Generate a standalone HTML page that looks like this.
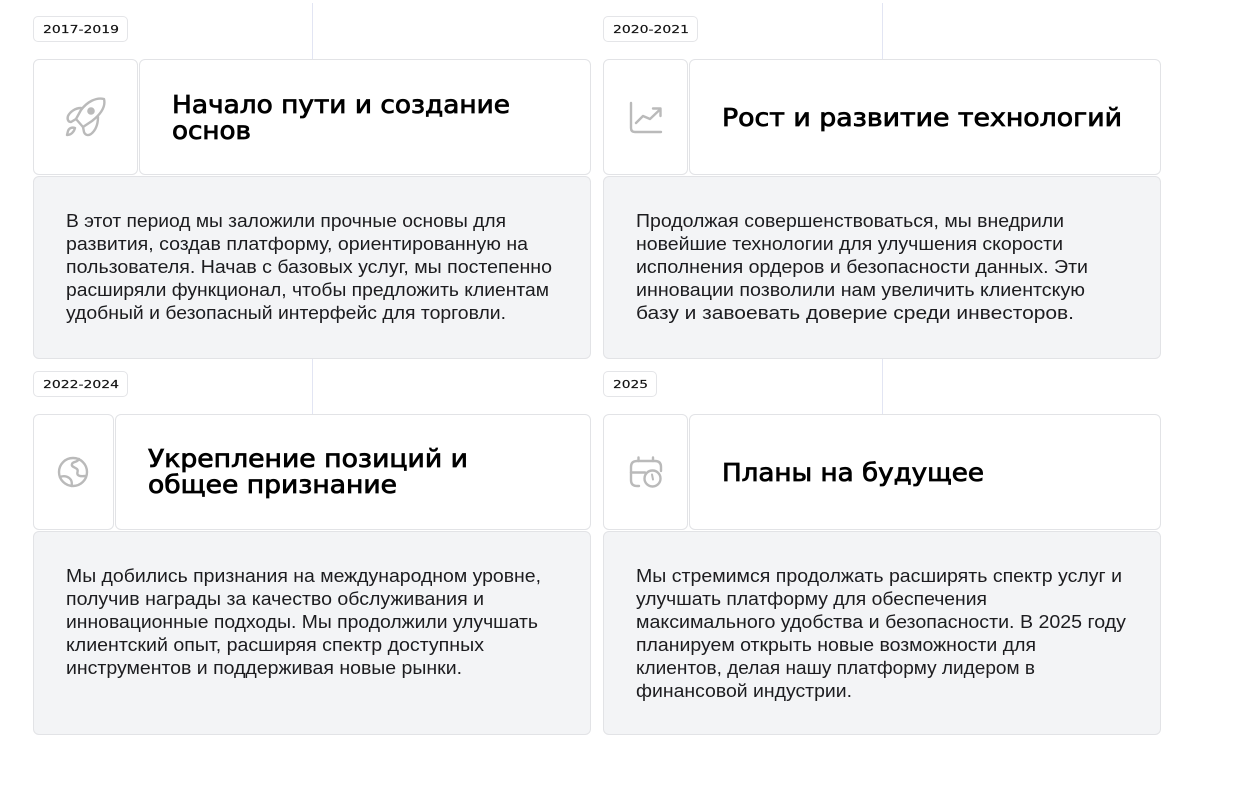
<!DOCTYPE html>
<html lang="ru">
<head>
<meta charset="utf-8">
<title>Timeline</title>
<style>
html,body{margin:0;padding:0;background:#fff;width:1248px;height:786px;overflow:hidden}
svg{display:block}
.box{fill:#fff;stroke:#e2e3e6;stroke-width:1}
.bd{fill:#f3f4f6;stroke:#e2e3e6;stroke-width:1}
.bg{fill:#fff;stroke:#e4e5e8;stroke-width:1}
.vl{stroke:#e2e5f3;stroke-width:1}
.t{font-family:"Liberation Sans","DejaVu Sans",sans-serif;font-size:18.5px;fill:#1c1c1f}
.h{font-family:"DejaVu Sans","Liberation Sans",sans-serif;font-size:24.5px;font-weight:400;fill:#000;stroke:#000;stroke-width:.8px}
.y{font-family:"DejaVu Sans","Liberation Sans",sans-serif;font-size:10.5px;fill:#111;stroke:#111;stroke-width:.15px}
.i{fill:none;stroke:#bababa;stroke-width:2.4;stroke-linecap:round;stroke-linejoin:round}
</style>
</head>
<body>
<svg width="1248" height="786" viewBox="0 0 1248 786" xmlns="http://www.w3.org/2000/svg">
<line class="vl" x1="312.5" y1="3" x2="312.5" y2="59"/>
<line class="vl" x1="882.5" y1="3" x2="882.5" y2="59"/>
<line class="vl" x1="312.5" y1="359" x2="312.5" y2="414"/>
<line class="vl" x1="882.5" y1="359" x2="882.5" y2="414"/>

<rect class="bg" x="33.5" y="16.5" width="94" height="25" rx="4.5"/>
<rect class="bg" x="603.5" y="16.5" width="94" height="25" rx="4.5"/>
<rect class="bg" x="33.5" y="371.5" width="94" height="25" rx="4.5"/>
<rect class="bg" x="603.5" y="371.5" width="53" height="25" rx="4.5"/>
<text class="y" x="43" y="33" textLength="76" lengthAdjust="spacingAndGlyphs">2017-2019</text>
<text class="y" x="613" y="33" textLength="76" lengthAdjust="spacingAndGlyphs">2020-2021</text>
<text class="y" x="43" y="388" textLength="76" lengthAdjust="spacingAndGlyphs">2022-2024</text>
<text class="y" x="613" y="388" textLength="35" lengthAdjust="spacingAndGlyphs">2025</text>

<rect class="box" x="33.5" y="59.5" width="104" height="115" rx="5.5"/>
<rect class="box" x="139.5" y="59.5" width="451" height="115" rx="5.5"/>
<rect class="bd" x="33.5" y="176.5" width="557" height="182" rx="5.5"/>
<rect class="box" x="603.5" y="59.5" width="84" height="115" rx="5.5"/>
<rect class="box" x="689.5" y="59.5" width="471" height="115" rx="5.5"/>
<rect class="bd" x="603.5" y="176.5" width="557" height="182" rx="5.5"/>
<rect class="box" x="33.5" y="414.5" width="80" height="115" rx="5.5"/>
<rect class="box" x="115.5" y="414.5" width="475" height="115" rx="5.5"/>
<rect class="bd" x="33.5" y="531.5" width="557" height="203" rx="5.5"/>
<rect class="box" x="603.5" y="414.5" width="84" height="115" rx="5.5"/>
<rect class="box" x="689.5" y="414.5" width="471" height="115" rx="5.5"/>
<rect class="bd" x="603.5" y="531.5" width="557" height="203" rx="5.5"/>

<!-- rocket -->
<path class="i" d="M104 99C96 97 87 102 81 110L76 119L83 127L92 121C101 114 106 107 104 99Z"/>
<path class="i" d="M81 108C75 108 70 112 68 116C67 119 68 122 71 122L76 119"/>
<path class="i" d="M98 117C98 124 96 130 91 134C88 136 85 135 84 132L83 127"/>
<path class="i" d="M75 128C72 127 69 128 68 131L67 135C71 135 74 132 75 128Z"/>
<circle cx="91" cy="111" r="3.8" fill="#bababa"/>

<!-- chart -->
<path class="i" d="M631 103V128Q631 132 635 132H661"/>
<path class="i" d="M636 123L643 116L650 119L660 109.500" stroke-width="2"/>
<path class="i" d="M653 108.500H660.500V116" stroke-width="2"/>

<!-- globe -->
<circle class="i" cx="73" cy="472" r="14"/>
<path class="i" d="M79 459C77 463 73 461 72 464C71 467 75 467 77 469C79 471 76 473 78 475C80 477 83 476 86 476" stroke-width="2"/>
<path class="i" d="M60 477C65 475 69 477 71 480C72 482 72 484 71.500 486" stroke-width="2"/>

<!-- calendar -->
<path class="i" d="M639 486H637Q631 486 631 480V467Q631 461 637 461H655Q661 461 661 467V471"/>
<path class="i" d="M638.500 457.500V461M653 457.500V461M631 472.500H645"/>
<circle class="i" cx="652.500" cy="478.500" r="8"/>
<path d="M652 474.500L653 479.500" fill="none" stroke="#bababa" stroke-width="2" stroke-linecap="round"/>

<!-- headings -->
<text class="h" x="172" y="113" textLength="338" lengthAdjust="spacingAndGlyphs">Начало пути и создание</text>
<text class="h" x="172" y="139" textLength="79" lengthAdjust="spacingAndGlyphs">основ</text>
<text class="h" x="722" y="126" textLength="400" lengthAdjust="spacingAndGlyphs">Рост и развитие технологий</text>
<text class="h" x="148" y="467" textLength="320" lengthAdjust="spacingAndGlyphs">Укрепление позиций и</text>
<text class="h" x="148" y="493" textLength="249" lengthAdjust="spacingAndGlyphs">общее признание</text>
<text class="h" x="722" y="481" textLength="262" lengthAdjust="spacingAndGlyphs">Планы на будущее</text>

<!-- body -->
<text class="t" x="66" y="227" textLength="440" lengthAdjust="spacingAndGlyphs">В этот период мы заложили прочные основы для</text>
<text class="t" x="66" y="250" textLength="462" lengthAdjust="spacingAndGlyphs">развития, создав платформу, ориентированную на</text>
<text class="t" x="66" y="273" textLength="486" lengthAdjust="spacingAndGlyphs">пользователя. Начав с базовых услуг, мы постепенно</text>
<text class="t" x="66" y="296" textLength="483" lengthAdjust="spacingAndGlyphs">расширяли функционал, чтобы предложить клиентам</text>
<text class="t" x="66" y="319" textLength="440" lengthAdjust="spacingAndGlyphs">удобный и безопасный интерфейс для торговли.</text>

<text class="t" x="636" y="227" textLength="428" lengthAdjust="spacingAndGlyphs">Продолжая совершенствоваться, мы внедрили</text>
<text class="t" x="636" y="250" textLength="427" lengthAdjust="spacingAndGlyphs">новейшие технологии для улучшения скорости</text>
<text class="t" x="636" y="273" textLength="452" lengthAdjust="spacingAndGlyphs">исполнения ордеров и безопасности данных. Эти</text>
<text class="t" x="636" y="296" textLength="449" lengthAdjust="spacingAndGlyphs">инновации позволили нам увеличить клиентскую</text>
<text class="t" x="636" y="319" textLength="438" lengthAdjust="spacingAndGlyphs">базу и завоевать доверие среди инвесторов.</text>

<text class="t" x="66" y="582" textLength="475" lengthAdjust="spacingAndGlyphs">Мы добились признания на международном уровне,</text>
<text class="t" x="66" y="605" textLength="418" lengthAdjust="spacingAndGlyphs">получив награды за качество обслуживания и</text>
<text class="t" x="66" y="628" textLength="472" lengthAdjust="spacingAndGlyphs">инновационные подходы. Мы продолжили улучшать</text>
<text class="t" x="66" y="651" textLength="418" lengthAdjust="spacingAndGlyphs">клиентский опыт, расширяя спектр доступных</text>
<text class="t" x="66" y="674" textLength="396" lengthAdjust="spacingAndGlyphs">инструментов и поддерживая новые рынки.</text>

<text class="t" x="636" y="582" textLength="486" lengthAdjust="spacingAndGlyphs">Мы стремимся продолжать расширять спектр услуг и</text>
<text class="t" x="636" y="605" textLength="351" lengthAdjust="spacingAndGlyphs">улучшать платформу для обеспечения</text>
<text class="t" x="636" y="628" textLength="490" lengthAdjust="spacingAndGlyphs">максимального удобства и безопасности. В 2025 году</text>
<text class="t" x="636" y="651" textLength="400" lengthAdjust="spacingAndGlyphs">планируем открыть новые возможности для</text>
<text class="t" x="636" y="674" textLength="399" lengthAdjust="spacingAndGlyphs">клиентов, делая нашу платформу лидером в</text>
<text class="t" x="636" y="697" textLength="216" lengthAdjust="spacingAndGlyphs">финансовой индустрии.</text>
</svg>
</body>
</html>
